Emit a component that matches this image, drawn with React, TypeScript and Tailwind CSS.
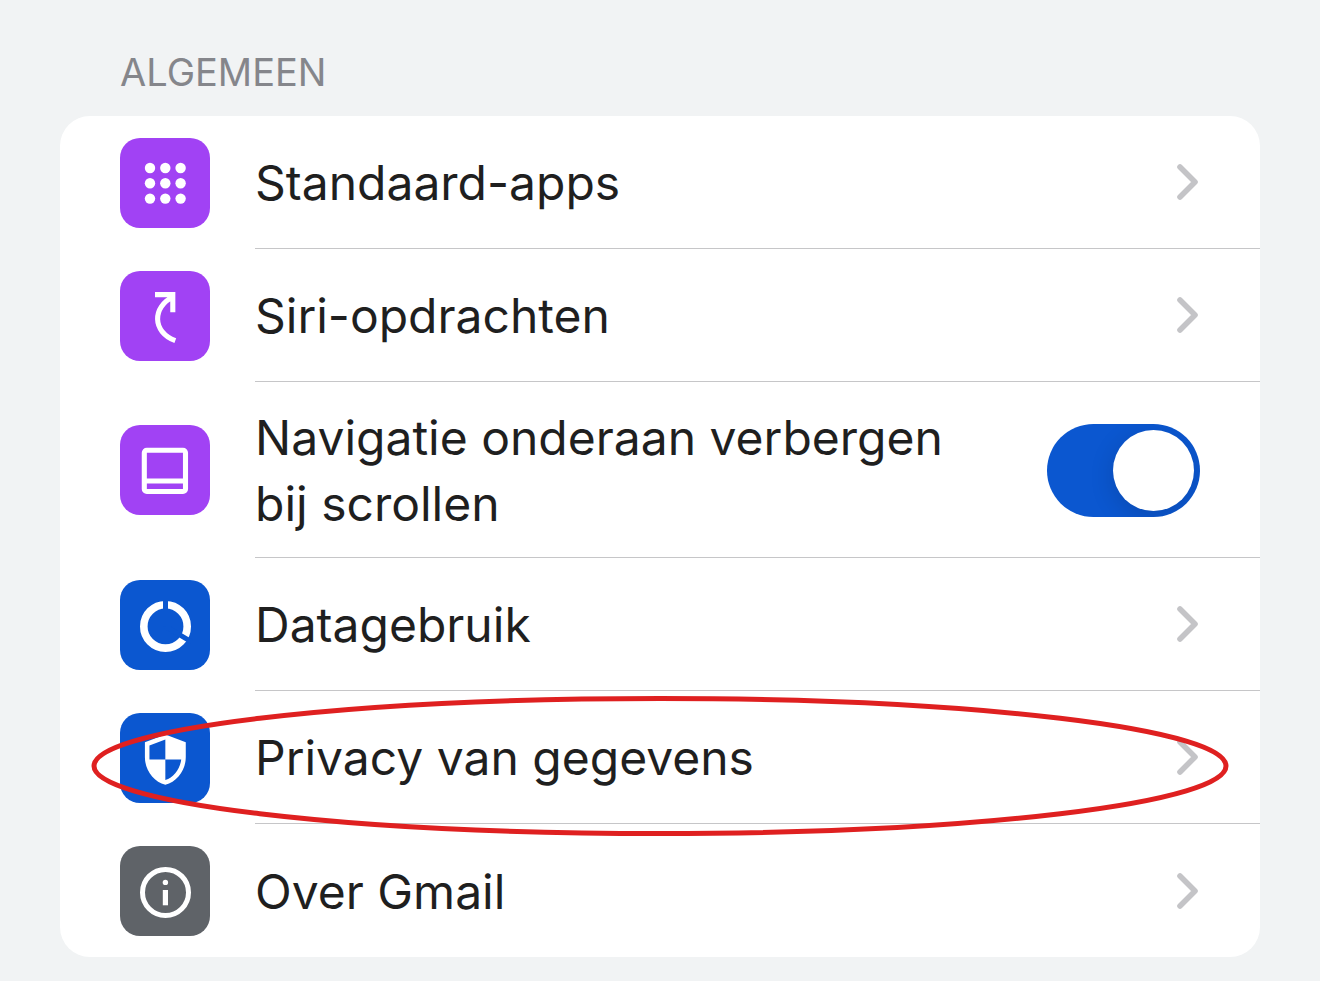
import type { ReactNode } from 'react';

function Tile({ color, children }: { color: string; children: ReactNode }) {
  return (
    <span className={`flex size-[90px] shrink-0 items-center justify-center rounded-[20px] ${color}`}>
      <svg viewBox="0 0 90 90" className="size-full" fill="none" stroke="white" aria-hidden="true">
        {children}
      </svg>
    </span>
  );
}

function Chevron() {
  return (
    <svg viewBox="0 0 24 40" className="mr-[60px] h-10 w-6 shrink-0" fill="none" stroke="#c4c4c7" strokeWidth="5.6" aria-hidden="true">
      <path d="M4 5L19 20L4 35" strokeLinecap="round" strokeLinejoin="round" />
    </svg>
  );
}

const purple = 'bg-[#a142f4]';
const blue = 'bg-[#0b57d0]';
const gray = 'bg-[#5f6368]';

const dots = [30, 45.3, 60.6];

type LinkRowProps = {
  label: string;
  color: string;
  icon: ReactNode;
  last?: boolean;
  marked?: boolean;
};

function LinkRow({ label, color, icon, last, marked }: LinkRowProps) {
  return (
    <li className="relative">
      <a href="#" className="flex h-[133px] items-stretch pl-[60px]">
        <span className="flex items-center pr-[45px]">
          <Tile color={color}>{icon}</Tile>
        </span>
        <span className={`flex flex-1 items-center justify-between ${last ? '' : 'border-b border-[#c6c6c8]'}`}>
          <span className="pt-0.5">{label}</span>
          <Chevron />
        </span>
      </a>
      {marked && (
        <svg
          viewBox="0 0 1138 140"
          preserveAspectRatio="none"
          className="pointer-events-none absolute top-[5px] right-[31px] left-[31px] h-[140px] w-[calc(100%-62px)]"
          fill="none"
          aria-hidden="true"
        >
          <ellipse cx="569" cy="70" rx="566" ry="67.5" stroke="#df2020" strokeWidth="5" />
        </svg>
      )}
    </li>
  );
}

export default function App() {
  return (
    <main className="min-h-screen bg-[#f1f3f4] px-[60px] pt-12 pb-6 font-['Inter','Liberation_Sans',sans-serif] text-[48px] leading-[66px] text-[#1f1f1f]">
      <h1 className="mb-5 pl-[60px] text-[38px] leading-[48px] text-[#85868b]">ALGEMEEN</h1>
      <ul className="rounded-[30px] bg-white">
        <LinkRow
          label="Standaard-apps"
          color={purple}
          icon={
            <g fill="white" stroke="none">
              {dots.map((y) => dots.map((x) => <circle key={`${x}-${y}`} cx={x} cy={y} r="5.2" />))}
            </g>
          }
        />
        <LinkRow
          label="Siri-opdrachten"
          color={purple}
          icon={<path d="M35 23.6H52.8V41.3M53.5 25.5C32 36 32 61 55.3 69.6" strokeWidth="5.1" />}
        />
        <li className="flex h-[176px] items-stretch pl-[60px]">
          <span className="flex items-center pr-[45px]">
            <Tile color={purple}>
              <rect x="24.3" y="25.3" width="41.2" height="41.2" rx="2.5" strokeWidth="5.1" />
              <path d="M24 56H66" strokeWidth="5.1" />
            </Tile>
          </span>
          <span className="flex flex-1 items-center justify-between border-b border-[#c6c6c8] pt-0.5 pr-[60px]">
            <label htmlFor="hide-nav" className="max-w-[720px]">
              Navigatie onderaan verbergen bij scrollen
            </label>
            <input
              id="hide-nav"
              type="checkbox"
              role="switch"
              defaultChecked
              className="relative h-[93px] w-[153px] shrink-0 appearance-none overflow-hidden rounded-full bg-[#0b57d0] before:absolute before:top-[6px] before:right-[6px] before:size-[81px] before:rounded-full before:bg-white before:shadow-[0_6px_24px_rgba(0,0,0,0.15)]"
            />
          </span>
        </li>
        <LinkRow
          label="Datagebruik"
          color={blue}
          icon={
            <>
              <circle cx="45.5" cy="46.4" r="21.7" strokeWidth="7.6" />
              <path d="M45.5 46.4V18M45.5 46.4L71.5 61.8" stroke="#0b57d0" strokeWidth="5" />
            </>
          }
        />
        <LinkRow
          label="Privacy van gegevens"
          color={blue}
          marked
          icon={
            <path
              transform="translate(18.1 19.1) scale(2.27 2.29)"
              fill="white"
              stroke="none"
              d="M12 1L3 4.4V11c0 5.55 3.84 10.74 9 12 5.16-1.26 9-6.45 9-12V4.4L12 1zm0 10.99h7c-.53 4.12-3.28 7.79-7 8.94V12H5V5.9l7-2.7v8.79z"
            />
          }
        />
        <LinkRow
          label="Over Gmail"
          color={gray}
          last
          icon={
            <>
              <circle cx="45.5" cy="46.4" r="23" strokeWidth="5" />
              <path d="M45.4 44V59.3" strokeWidth="5.2" />
              <circle cx="45.4" cy="36.4" r="2.7" fill="white" stroke="none" />
            </>
          }
        />
      </ul>
    </main>
  );
}
